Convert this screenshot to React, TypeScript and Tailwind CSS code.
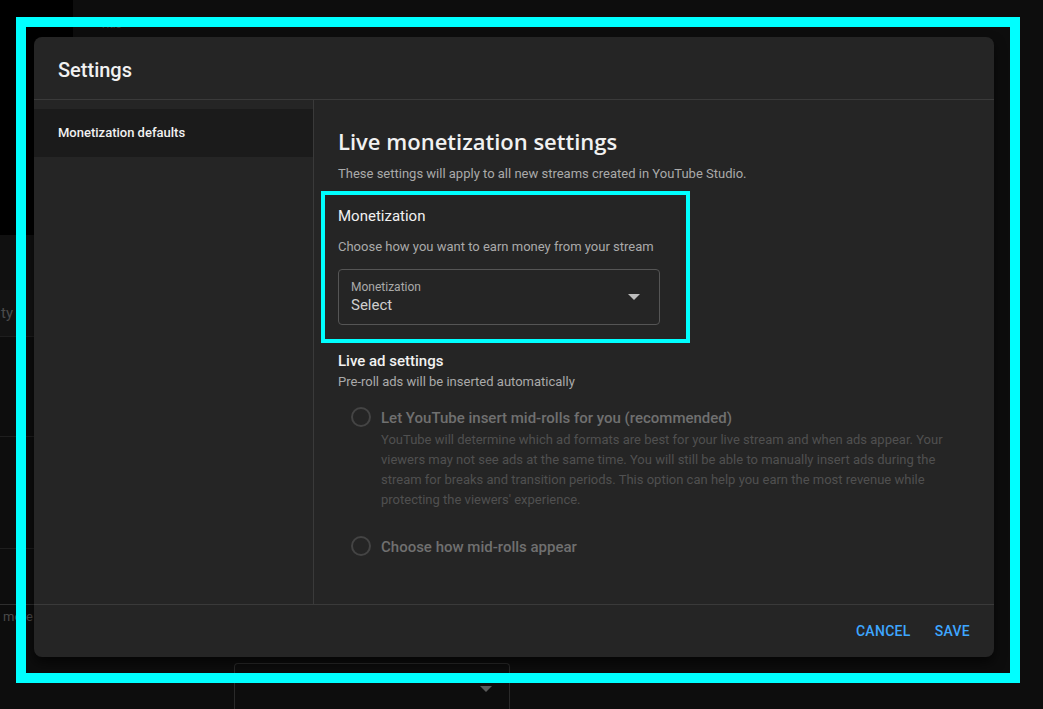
import React from "react";

const font = { fontFamily: "Roboto, 'Liberation Sans', sans-serif" };

function Caret({ className }: { className?: string }) {
  return (
    <svg viewBox="0 0 10 5" className={className} fill="currentColor">
      <path d="M0 0h10L5 5z" />
    </svg>
  );
}

function BackgroundPage() {
  return (
    <div className="flex h-full w-full">
      <div className="flex w-[73px] flex-col">
        <div className="h-[235px] bg-black" />
        <div className="h-[55px] bg-[#101010]" />
        <div className="flex h-[47px] items-center border-b border-[#1e1e1e] bg-[#131313] pl-[1px] text-[15px] text-[#4a4a4a]">
          <span>ty</span>
        </div>
        <div className="h-[100px] border-b border-[#1e1e1e]" />
        <div className="h-[112px] border-b border-[#1e1e1e]" />
        <div className="h-[56px] border-b border-[#2e2e2e]" />
        <div className="pl-[3px] pt-[2px] text-[13px] text-[#4a4a4a]">more</div>
      </div>
      <div className="flex flex-1 flex-col">
        <div className="pl-[27px] pt-[19px] text-[11px] leading-none text-[#3a3a3a]">Title</div>
        <div className="flex-1" />
        <div className="ml-[161px] flex h-[46px] w-[276px] items-start justify-end rounded-t-[4px] border border-b-0 border-[#2a2a2a] pr-[17px] pt-[22px]">
          <Caret className="h-[6px] w-[12px] text-[#5a5a5a]" />
        </div>
      </div>
    </div>
  );
}

function Radio({ title, children, className }: { title: string; children?: React.ReactNode; className?: string }) {
  return (
    <div className={"flex gap-[10px] " + (className ?? "")}>
      <div className="mt-[-1px] h-[20px] w-[20px] shrink-0 rounded-full border-2 border-[#444]" />
      <div className="flex flex-col">
        <div className="text-[15px] font-medium leading-[20px] text-[#707070]">{title}</div>
        {children && <div className="mt-[2px] text-[13px] leading-[20px] text-[#505050]">{children}</div>}
      </div>
    </div>
  );
}

function SettingsDialog() {
  return (
    <div className="flex h-[620px] w-[960px] flex-col rounded-[8px] bg-[#252525] shadow-[0_6px_12px_rgba(0,0,0,0.6)]">
      <div className="flex h-[63px] shrink-0 items-center border-b border-[#3a3a3a] px-[24px] pt-[3px] text-[20px] font-medium text-[#f1f1f1]">
        Settings
      </div>
      <div className="flex min-h-0 flex-1">
        <div className="w-[280px] shrink-0 border-r border-[#3a3a3a] pt-[9px]">
          <div className="flex h-[48px] items-center bg-[#1b1b1b] pl-[24px] text-[13px] font-medium text-[#f1f1f1]">
            Monetization defaults
          </div>
        </div>
        <div className="flex-1 pl-[24px] pt-[26px]">
          <h1 className="text-[22px] leading-[30px] font-semibold text-[#f1f1f1]" style={{ fontFamily: "'Open Sans', Roboto, sans-serif" }}>
            Live monetization settings
          </h1>
          <p className="mt-[10px] text-[13px] leading-[16px] text-[#aaaaaa]">
            These settings will apply to all new streams created in YouTube Studio.
          </p>
          <div className="mt-[26px] text-[15px] leading-[16px] text-[#f1f1f1]">Monetization</div>
          <p className="mt-[15px] text-[13px] leading-[16px] text-[#aaaaaa]">Choose how you want to earn money from your stream</p>
          <div className="mt-[14px] flex h-[56px] w-[322px] items-center justify-between rounded-[4px] border border-[#555] pl-[12px] pr-[19px]">
            <div className="flex flex-col">
              <span className="text-[12px] leading-[14px] text-[#aaaaaa]">Monetization</span>
              <span className="mt-[2px] text-[15px] leading-[18px] text-[#cfcfcf]">Select</span>
            </div>
            <Caret className="h-[6px] w-[12px] text-[#bdbdbd]" />
          </div>
          <div className="mt-[27px] text-[15px] font-medium leading-[18px] text-[#f1f1f1]">Live ad settings</div>
          <p className="mt-[4px] text-[13px] leading-[16px] text-[#aaaaaa]">Pre-roll ads will be inserted automatically</p>
          <div className="pl-[13px] pr-[40px]">
            <Radio title="Let YouTube insert mid-rolls for you (recommended)" className="mt-[18px]">
              YouTube will determine which ad formats are best for your live stream and when ads appear. Your viewers may
              not see ads at the same time. You will still be able to manually insert ads during the stream for breaks and
              transition periods. This option can help you earn the most revenue while protecting the viewers' experience.
            </Radio>
            <Radio title="Choose how mid-rolls appear" className="mt-[27px]" />
          </div>
        </div>
      </div>
      <div className="flex h-[53px] shrink-0 items-center justify-end gap-[24px] border-t border-[#3a3a3a] pr-[24px] text-[14px] font-medium tracking-[0.3px] text-[#3ea6ff]">
        <button>CANCEL</button>
        <button>SAVE</button>
      </div>
    </div>
  );
}

export default function App() {
  return (
    <div className="relative h-[709px] w-[1043px] overflow-hidden bg-[#0d0d0d]" style={font}>
      <BackgroundPage />
      <div className="absolute left-[34px] top-[37px]">
        <SettingsDialog />
      </div>
      {/* annotation frames */}
      <div className="pointer-events-none absolute left-[16px] top-[17px] h-[666px] w-[1004px] border-[10px] border-[#00ffff]" />
      <div className="pointer-events-none absolute left-[321px] top-[191px] h-[152px] w-[369px] border-4 border-[#00ffff]" />
    </div>
  );
}
